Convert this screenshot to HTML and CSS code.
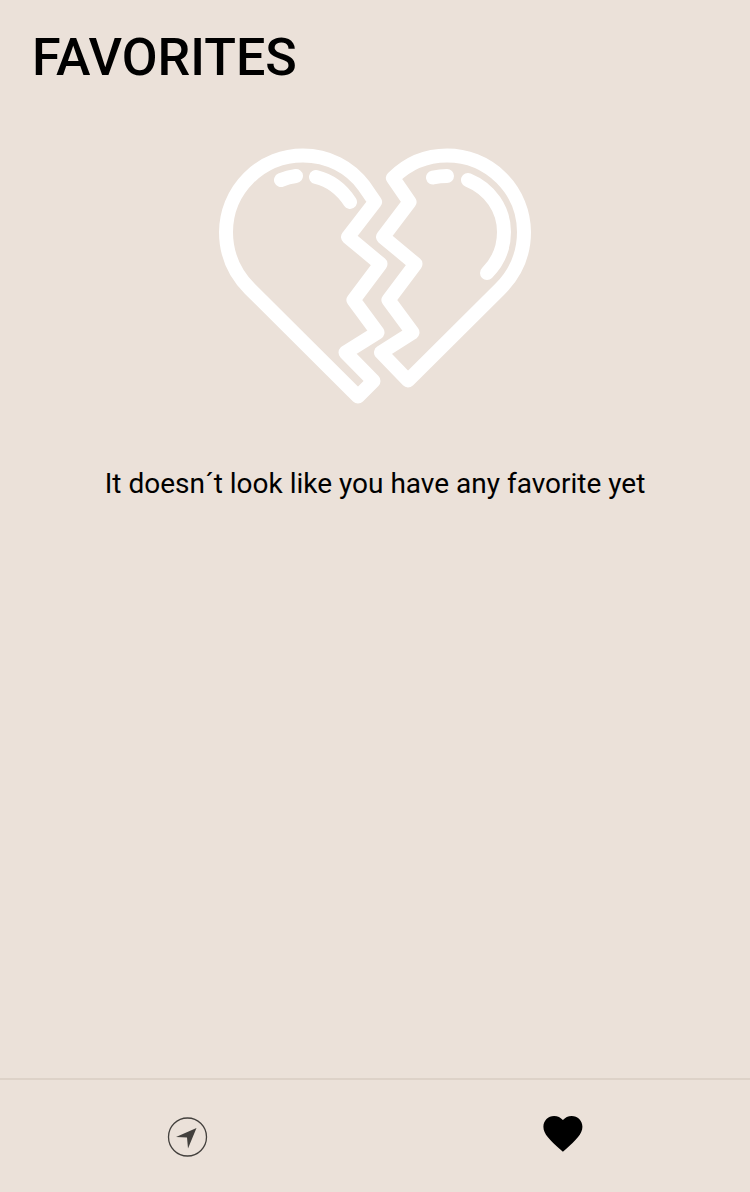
FILE: index.html
```html
<!DOCTYPE html>
<html lang="en">
<head>
<meta charset="utf-8">
<meta name="viewport" content="width=device-width, initial-scale=1">
<title>Favorites</title>
<link rel="stylesheet" href="styles.css">
</head>
<body>
<header class="header"><h1 class="title">FAVORITES</h1></header>
<main class="empty">
  <svg class="broken-heart" viewBox="0 0 312 256" aria-hidden="true">
    <g transform="translate(-219 -148)">
      <path d="M375 202L364 186C350 167 328 155.500 303 155.500A77 77 0 0 0 226 232C226 254 235 274 250 289L358 396.500L373.500 381L345.500 352.500L377.500 332.500L353.500 300L380.500 264L348 237Z"/>
      <path d="M393 178L409.500 202L383 237L415.500 264L388.500 300L412.500 332.500L381 352.500L408 380.500L500 289C515 274 524 254 524 232A77 77 0 0 0 447 155.500C425 155.500 407 164 393 178Z"/>
      <path d="M281 180Q288 177 296 176M316 177Q337 182 350 202M433 177.500Q440 176 447 176M468 180C490 189 504 209 504 232C504 248 498 262 487 273"/>
    </g>
  </svg>
  <p class="message">It doesn´t look like you have any favorite yet</p>
</main>
<nav class="tabs" aria-label="Main">
  <a class="tab" href="#explore" aria-label="Explore">
    <svg class="icon" viewBox="0 0 40 40" aria-hidden="true">
      <circle cx="19.500" cy="20" r="19" fill="none" stroke="#43403d" stroke-width="1.300"/>
      <path d="M28.500 11L20 31.500L19 20.500L8 20Z" fill="#43403d"/>
    </svg>
  </a>
  <a class="tab" href="#favorites" aria-label="Favorites" aria-current="page">
    <svg class="icon" viewBox="1.800 3.500 20.500 20.500" aria-hidden="true">
      <path d="M12 21.350l-1.450-1.320C5.400 15.360 2 12.280 2 8.500 2 5.420 4.420 3 7.500 3c1.740 0 3.410.810 4.500 2.090C13.090 3.810 14.760 3 16.500 3 19.580 3 22 5.420 22 8.500c0 3.780-3.400 6.860-8.550 11.540L12 21.350z"/>
    </svg>
  </a>
</nav>
</body>
</html>
```
FILE: styles.css
```css
* { box-sizing: border-box; }
body {
  margin: 0;
  min-height: 100vh;
  display: flex;
  flex-direction: column;
  background: #ebe1d9;
  color: #000;
  font-family: Roboto, sans-serif;
}
.header { padding: 26px 32px 0; }
.title {
  margin: 0;
  font-size: 52px;
  line-height: 64px;
  font-weight: 500;
}
.empty {
  flex: 1;
  display: flex;
  flex-direction: column;
  align-items: center;
  gap: 60px;
  padding: 58px 32px;
}
.broken-heart {
  width: 312px;
  height: 256px;
  fill: none;
  stroke: #fff;
  stroke-width: 14;
  stroke-linecap: round;
  stroke-linejoin: round;
}
.message {
  margin: 0;
  font-size: 28px;
  line-height: 40px;
  text-align: center;
}
.tabs {
  display: flex;
  height: 114px;
  padding-top: 2px;
  border-top: 2px solid #ddd2c8;
}
.tab {
  flex: 1;
  display: flex;
  align-items: center;
  justify-content: center;
  color: #000;
}
.icon {
  width: 40px;
  height: 40px;
  overflow: visible;
}
```
